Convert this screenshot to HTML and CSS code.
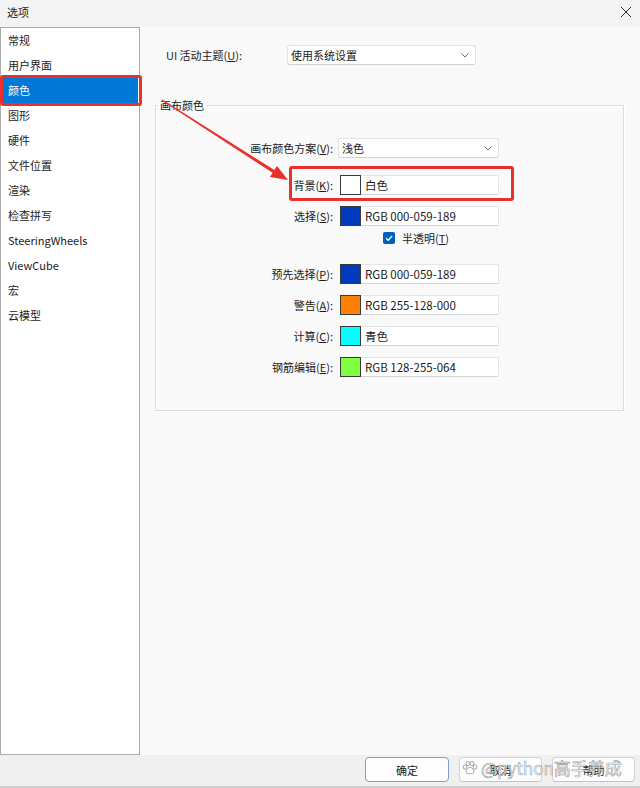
FILE: index.html
```html
<!DOCTYPE html>
<html lang="zh-CN">
<head>
  <meta charset="UTF-8" />
  <title>选项</title>
  <link rel="stylesheet" href="styles.css">
</head>
<body>
  <div class="window">
    <div class="titlebar">
      <span class="title">选项</span>
      <svg class="close-btn" viewBox="0 0 12 12" width="12" height="12">
        <path d="M1 1 L11 11 M11 1 L1 11" stroke="#2b2b2b" stroke-width="1" fill="none"/>
      </svg>
    </div>

    <div class="dialog-body">
      <div class="nav">
        <div class="nav-item">常规</div>
        <div class="nav-item">用户界面</div>
        <div class="nav-item active">颜色</div>
        <div class="nav-item">图形</div>
        <div class="nav-item">硬件</div>
        <div class="nav-item">文件位置</div>
        <div class="nav-item">渲染</div>
        <div class="nav-item">检查拼写</div>
        <div class="nav-item">SteeringWheels</div>
        <div class="nav-item">ViewCube</div>
        <div class="nav-item">宏</div>
        <div class="nav-item">云模型</div>
      </div>

      <div class="main">
        <div class="theme-row">
          <label>UI 活动主题(<u>U</u>):</label>
          <div class="select wide">
            <span>使用系统设置</span>
            <svg class="chevron" viewBox="0 0 8 5"><path d="M0.5 0.5 L4 4 L7.5 0.5" stroke="#6a6a6a" fill="none"/></svg>
          </div>
        </div>

        <fieldset class="group">
          <legend>画布颜色</legend>

          <div class="field-row">
            <label>画布颜色方案(<u>V</u>):</label>
            <div class="select">
              <span>浅色</span>
              <svg class="chevron" viewBox="0 0 8 5"><path d="M0.5 0.5 L4 4 L7.5 0.5" stroke="#6a6a6a" fill="none"/></svg>
            </div>
          </div>

          <div class="field-row first-color">
            <label>背景(<u>K</u>):</label>
            <div class="color-field">
              <span class="swatch white"></span>
              <span class="value">白色</span>
            </div>
          </div>

          <div class="field-row">
            <label>选择(<u>S</u>):</label>
            <div class="color-field">
              <span class="swatch blue"></span>
              <span class="value">RGB 000-059-189</span>
            </div>
          </div>

          <div class="field-row check-row">
            <span></span>
            <div class="check">
              <span class="checkbox">
                <svg viewBox="0 0 12 12" width="12" height="12"><path d="M3 6.2 L5.2 8.3 L9.2 3.9" stroke="#fff" stroke-width="1.3" fill="none"/></svg>
              </span>
              <span>半透明(<u>T</u>)</span>
            </div>
          </div>

          <div class="field-row after-check">
            <label>预先选择(<u>P</u>):</label>
            <div class="color-field">
              <span class="swatch blue"></span>
              <span class="value">RGB 000-059-189</span>
            </div>
          </div>

          <div class="field-row">
            <label>警告(<u>A</u>):</label>
            <div class="color-field">
              <span class="swatch orange"></span>
              <span class="value">RGB 255-128-000</span>
            </div>
          </div>

          <div class="field-row">
            <label>计算(<u>C</u>):</label>
            <div class="color-field">
              <span class="swatch cyan"></span>
              <span class="value">青色</span>
            </div>
          </div>

          <div class="field-row">
            <label>钢筋编辑(<u>E</u>):</label>
            <div class="color-field">
              <span class="swatch green"></span>
              <span class="value">RGB 128-255-064</span>
            </div>
          </div>
        </fieldset>
      </div>
    </div>

    <div class="footer">
      <button class="btn default">确定</button>
      <button class="btn">取消</button>
      <button class="btn">帮助</button>
    </div>

    <!-- annotations drawn over the dialog -->
    <div class="mark mark-nav"></div>
    <div class="mark mark-bg"></div>
    <svg class="arrow" viewBox="0 0 640 788" width="640" height="788">
      <polygon points="162.3,99.5 274.4,170.1 277,165.9 288,180 270,176.9 272.6,172.8 161.7,100.5" fill="#e8302c"/>
    </svg>

    <div class="watermark">
      <svg class="paw" viewBox="0 0 16 16" width="16" height="16">
        <g fill="rgba(255,255,255,0.8)" stroke="#9a9a9a" stroke-width="0.9">
          <ellipse cx="3" cy="7" rx="1.8" ry="2.2"/>
          <ellipse cx="6" cy="3.6" rx="1.8" ry="2.2"/>
          <ellipse cx="10" cy="3.6" rx="1.8" ry="2.2"/>
          <ellipse cx="13" cy="7" rx="1.8" ry="2.2"/>
          <path d="M8 7.5 C5 7.5 3.5 11 4.5 13 C5.5 14.5 7 13.5 8 13.5 C9 13.5 10.5 14.5 11.5 13 C12.5 11 11 7.5 8 7.5 Z"/>
        </g>
      </svg>
      <span>@python高手养成</span>
    </div>
  </div>
</body>
</html>
```

FILE: styles.css
```css
* {
  box-sizing: border-box;
}
body {
  margin: 0;
  font-family: "Noto Sans CJK SC", "Noto Sans", sans-serif;
  font-size: 11px;
  color: #1b1b1b;
}

.window {
  position: relative;
  width: 640px;
  height: 788px;
  display: flex;
  flex-direction: column;
  background: #f9f9f9;
  overflow: hidden;
}

.titlebar {
  flex: none;
  height: 27px;
  display: flex;
  align-items: center;
  justify-content: space-between;
  padding: 0 8px 3px 7px;
  background: #f3f3f3;
}

.titlebar .title {
  line-height: 16px;
}

.dialog-body {
  flex: 1;
  display: flex;
}

/* left category list */
.nav {
  width: 140px;
  background: #fff;
  border: 1px solid #ababab;
  padding: 0 1px;
}

.nav-item {
  height: 25px;
  line-height: 25px;
  padding-left: 6px;
  white-space: nowrap;
}

.nav-item.active {
  background: #0078d7;
  color: #fff;
}

.main {
  flex: 1;
  padding: 18px 16px 0 15px;
}

.theme-row {
  display: flex;
  align-items: center;
  height: 20px;
  padding-left: 11px;
}

.theme-row label {
  width: 121px;
}

.select {
  height: 20px;
  display: flex;
  align-items: center;
  justify-content: space-between;
  padding: 0 6px 0 3px;
  background: #fff;
  border: 1px solid #e3e3e3;
  border-bottom-color: #d2d2d2;
  border-radius: 3px;
  line-height: 18px;
}

.select.wide {
  width: 189px;
}

.chevron {
  width: 8px;
  height: 5px;
}

/* group box */
.group {
  margin: 32px 0 0;
  padding: 25px 0 0;
  height: 314px;
  border: 1px solid #dcdcdc;
  box-shadow: inset 1px 1px 0 #fff, 1px 1px 0 #fff;
}

.group legend {
  margin-left: 2px;
  padding: 0 2px;
  line-height: 16px;
}

.field-row {
  display: grid;
  grid-template-columns: 177px 161px;
  column-gap: 5px;
  align-items: center;
  height: 20px;
  margin-top: 11px;
}

.field-row:first-of-type {
  margin-top: 0;
}

.field-row.first-color {
  margin-top: 17px;
}

.field-row label {
  text-align: right;
  white-space: nowrap;
}

.color-field {
  display: flex;
  align-items: center;
  height: 20px;
  margin-left: 2px;
  background: #fff;
  border: 1px solid #e4e4e4;
  border-bottom-color: #d4d4d4;
  border-radius: 2px;
}

.swatch {
  width: 21px;
  height: 20px;
  margin: -1px 0 -1px -1px;
  border: 1px solid #3a3a3a;
}

.swatch.white { background: #fff; }
.swatch.blue { background: #003bbd; }
.swatch.orange { background: #ff8000; }
.swatch.cyan { background: #00ffff; }
.swatch.green { background: #80ff40; }

.color-field .value {
  padding-left: 4px;
  line-height: 18px;
  font-size: 11.5px;
}

.check-row {
  height: 14px;
  margin-top: 5px;
}

.check {
  display: flex;
  align-items: center;
  gap: 7px;
  margin-left: 45px;
  line-height: 14px;
}

.checkbox {
  width: 12px;
  height: 12px;
  display: flex;
  background: #005fb8;
  border-radius: 2px;
}

.field-row.after-check {
  margin-top: 19px;
}

/* bottom buttons */
.footer {
  flex: none;
  height: 33px;
  display: flex;
  justify-content: flex-end;
  gap: 10px;
  padding: 2px 5px 0 0;
  background: #f0f0f0;
  border-bottom: 2px solid #cdcdcd;
}

.btn {
  width: 83px;
  height: 25px;
  font-family: inherit;
  font-size: 11px;
  color: #1b1b1b;
  background: #fdfdfd;
  border: 1px solid #d3d3d3;
  border-bottom-color: #c2c2c2;
  border-radius: 4px;
}

.btn.default {
  width: 84px;
  border-color: #7f9fc6;
}

/* red annotations */
.mark {
  position: absolute;
  border: 3px solid #e8302c;
  border-radius: 3px;
  pointer-events: none;
}

.mark-nav {
  left: 0;
  top: 75px;
  width: 142px;
  height: 31px;
}

.mark-bg {
  left: 289px;
  top: 166px;
  width: 225px;
  height: 35px;
}

.arrow {
  position: absolute;
  left: 0;
  top: 0;
  pointer-events: none;
}

.watermark {
  position: absolute;
  left: 462px;
  top: 757px;
  display: flex;
  align-items: center;
  gap: 3px;
  font-size: 17px;
  line-height: 22px;
  color: rgba(255, 255, 255, 0.7);
  -webkit-text-stroke: 0.6px rgba(110, 110, 110, 0.7);
  pointer-events: none;
}
```
